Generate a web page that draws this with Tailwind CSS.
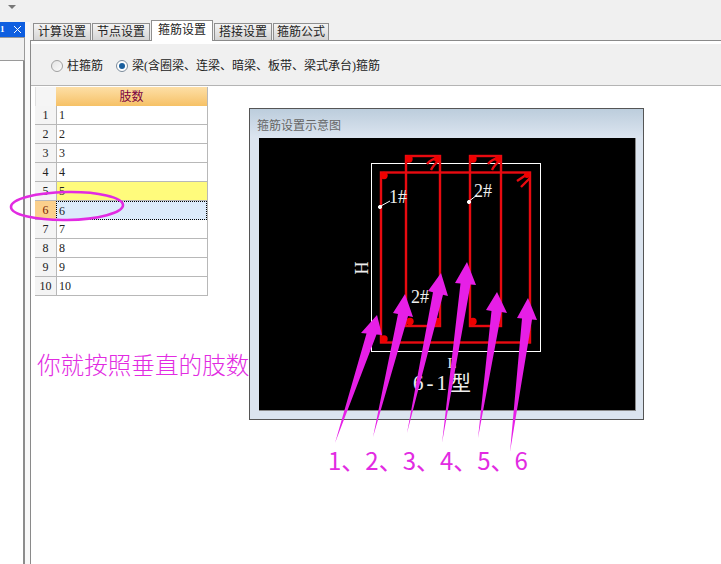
<!DOCTYPE html>
<html lang="zh">
<head>
<meta charset="utf-8">
<script src="https://cdn.jsdelivr.net/npm/@tailwindcss/browser@4"></script>
</head>
<body class="bg-white">
<div class="relative flex w-[721px] h-[564px] overflow-hidden bg-white text-[12px] leading-none text-[#222] font-['Liberation_Serif','Noto_Sans_CJK_SC',serif]">
  <!-- left dock -->
  <aside class="w-[30px] shrink-0 flex flex-col bg-[#f8f8f8]">
    <div class="h-[22px] bg-[#f0f0f0] flex justify-center pt-[5px] pr-[6px]">
      <span class="w-0 h-0 border-x-[4px] border-x-transparent border-t-[4px] border-t-[#777]"></span>
    </div>
    <div class="h-[15px] w-[25px] bg-[#0f5fe0] flex items-center justify-between pl-0 pr-[3px] text-white">
      <span class="text-[9px] font-bold">1</span>
      <svg width="9" height="9" viewBox="0 0 9 9"><path d="M1 1l7 7M8 1l-7 7" stroke="#fff" stroke-width="1"/></svg>
    </div>
    <div class="h-[24px] w-[25px] bg-[#f0f0f0] border-t border-b border-r border-[#9a9a9a]"></div>
    <div class="flex-1 w-[25px] bg-white border-r-2 border-[#8c8c8c]"></div>
  </aside>

  <main class="flex-1 flex flex-col border-l-0">
    <!-- tabs -->
    <div class="h-[41px] shrink-0 bg-[#f0f0f0] border-b border-[#8a8a8a] flex items-end pl-[3px] gap-px">
      <div class="w-[58px] h-[17px] bg-gradient-to-b from-[#f4f4f4] to-[#d4d4d4] border border-b-0 border-[#8f8f8f] flex items-center justify-center">计算设置</div>
      <div class="w-[58px] h-[17px] bg-gradient-to-b from-[#f4f4f4] to-[#d4d4d4] border border-b-0 border-[#8f8f8f] flex items-center justify-center">节点设置</div>
      <div class="w-[62px] h-[21px] -mb-px relative bg-white border border-b-0 border-[#8f8f8f] flex items-center justify-center pb-[2px]">箍筋设置</div>
      <div class="w-[58px] h-[17px] bg-gradient-to-b from-[#f4f4f4] to-[#d4d4d4] border border-b-0 border-[#8f8f8f] flex items-center justify-center">搭接设置</div>
      <div class="w-[56px] h-[17px] bg-gradient-to-b from-[#f4f4f4] to-[#d4d4d4] border border-b-0 border-[#8f8f8f] flex items-center justify-center">箍筋公式</div>
    </div>

    <!-- pane -->
    <div class="flex-1 border-l border-[#8a8a8a] flex flex-col">
      <div class="h-[3px] bg-white"></div>
      <div class="h-[42px] shrink-0 bg-[#f0f0f0] border-b border-[#b4b4b4] flex items-center pl-[20px] pt-[3px]">
        <span class="w-[12px] h-[12px] rounded-full border border-[#a0a0a0] bg-gradient-to-br from-[#e4e4e4] to-[#fafafa]"></span>
        <span class="ml-[4px]">柱箍筋</span>
        <span class="ml-[13px] w-[12px] h-[12px] rounded-full border border-[#7a8a9a] bg-white flex items-center justify-center"><span class="w-[6px] h-[6px] rounded-full bg-[#1a5f9e]"></span></span>
        <span class="ml-[4px]">梁(含圈梁、连梁、暗梁、板带、梁式承台)箍筋</span>
      </div>

      <div class="flex flex-1">
        <!-- table column -->
        <div class="w-[173px] ml-[4px] mt-px shrink-0 flex flex-col">
          <div class="grid grid-cols-[21px_151px] auto-rows-[19px] border-r border-[#b8b8b8] w-[173px]">
            <div class="bg-[#f5f5f5] border-l border-[#e0e0e0]"></div>
            <div class="bg-gradient-to-b from-[#fddfa6] to-[#f6c165] flex items-center justify-center text-[#7a0040]">肢数</div>

            <div class="bg-[#f4f4f4] border-b border-[#b8b8b8] flex items-center justify-center">1</div>
            <div class="bg-white border-b border-l border-[#b8b8b8] flex items-center pl-[2px]">1</div>
            <div class="bg-[#f4f4f4] border-b border-[#b8b8b8] flex items-center justify-center">2</div>
            <div class="bg-white border-b border-l border-[#b8b8b8] flex items-center pl-[2px]">2</div>
            <div class="bg-[#f4f4f4] border-b border-[#b8b8b8] flex items-center justify-center">3</div>
            <div class="bg-white border-b border-l border-[#b8b8b8] flex items-center pl-[2px]">3</div>
            <div class="bg-[#f4f4f4] border-b border-[#b8b8b8] flex items-center justify-center">4</div>
            <div class="bg-white border-b border-l border-[#b8b8b8] flex items-center pl-[2px]">4</div>
            <div class="bg-[#f4f4f4] border-b border-[#b8b8b8] flex items-center justify-center">5</div>
            <div class="bg-[#fffb7c] border-b border-l border-[#b8b8b8] flex items-center pl-[2px]">5</div>
            <div class="bg-[#fbd08c] border-b border-[#b8b8b8] flex items-center justify-center text-[#7a2000]">6</div>
            <div class="bg-[#dcebfb] border border-dotted border-black flex items-center pl-[2px]">6</div>
            <div class="bg-[#f4f4f4] border-b border-[#b8b8b8] flex items-center justify-center">7</div>
            <div class="bg-white border-b border-l border-[#b8b8b8] flex items-center pl-[2px]">7</div>
            <div class="bg-[#f4f4f4] border-b border-[#b8b8b8] flex items-center justify-center">8</div>
            <div class="bg-white border-b border-l border-[#b8b8b8] flex items-center pl-[2px]">8</div>
            <div class="bg-[#f4f4f4] border-b border-[#b8b8b8] flex items-center justify-center">9</div>
            <div class="bg-white border-b border-l border-[#b8b8b8] flex items-center pl-[2px]">9</div>
            <div class="bg-[#f4f4f4] border-b border-[#b8b8b8] flex items-center justify-center">10</div>
            <div class="bg-white border-b border-l border-[#b8b8b8] flex items-center pl-[2px]">10</div>
          </div>
          <p class="relative z-10 mt-[55px] ml-[2px] whitespace-nowrap text-[23.6px] leading-[27px] text-[#e22be2] font-['Noto_Sans_CJK_SC',sans-serif] font-light">你就按照垂直的肢数</p>
        </div>

        <!-- diagram column -->
        <div class="ml-[41px] mt-[22px] w-[395px] flex flex-col">
          <div class="w-[395px] h-[312px] border border-[#555] bg-[#dbe4ef] flex flex-col">
            <div class="h-[29px] shrink-0 pl-[7px] pt-[11px] text-[#666] bg-gradient-to-b from-[#bccddc] to-[#dce5f0]">箍筋设置示意图</div>
            <div class="ml-[9px] w-[377px] h-[273px] bg-black border-r border-b border-[#888]">
              <svg width="376" height="272" viewBox="259 138 376 272" class="block">
                <rect x="371.5" y="163.5" width="169" height="188" fill="none" stroke="#fff" stroke-width="1"/>
                <g fill="none" stroke="#e80a10" stroke-width="2.4">
                  <rect x="381" y="172.5" width="149" height="170"/>
                  <rect x="406" y="156" width="34" height="170"/>
                  <rect x="470" y="156" width="31" height="170"/>
                  <path d="M427 164q4-5 11-6M431 170q3-6 8-9"/>
                  <path d="M488 164q4-5 11-6M492 170q3-6 8-9"/>
                  <path d="M517 181l12-8M521 187l9-9"/>
                </g>
                <g fill="#f00000">
                  <circle cx="384" cy="175.5" r="3.7"/>
                  <circle cx="409" cy="159" r="3.7"/>
                  <circle cx="473" cy="159" r="3.7"/>
                  <circle cx="437" cy="159" r="3"/>
                  <circle cx="498" cy="159" r="3"/>
                  <circle cx="527" cy="175" r="3"/>
                  <circle cx="384" cy="339" r="3.7"/>
                  <circle cx="410" cy="321.5" r="3.7"/>
                  <circle cx="437" cy="321.5" r="3.7"/>
                  <circle cx="473" cy="321.5" r="3.7"/>
                  <circle cx="498" cy="322" r="3"/>
                  <circle cx="528" cy="340" r="2"/>
                </g>
                <g stroke="#fff" stroke-width="1" fill="#fff">
                  <path d="M379 207l11-6"/>
                  <path d="M468 202l9-7"/>
                  <circle cx="380" cy="207" r="1.6"/>
                  <circle cx="469" cy="202" r="1.6"/>
                </g>
                <g fill="#eee" class="font-['Liberation_Serif','Noto_Sans_CJK_SC',serif]">
                  <text x="389" y="203" font-size="18">1#</text>
                  <text x="474" y="197" font-size="18">2#</text>
                  <text x="411" y="303" font-size="18">2#</text>
                  <text x="362" y="274" font-size="18" text-anchor="middle" transform="rotate(-90 362 268)">H</text>
                  <text x="452" y="368" font-size="15" text-anchor="middle">L</text>
                  <text x="413" y="390" font-size="21" letter-spacing="3">6-1<tspan letter-spacing="0">型</tspan></text>
                </g>
              </svg>
            </div>
          </div>
          <p class="relative z-10 mt-[28px] ml-[79px] whitespace-nowrap text-[24px] leading-[24px] text-[#e22be2] font-['Noto_Sans_CJK_SC',sans-serif]">1、2、3、4、5、6</p>
        </div>
      </div>
    </div>
  </main>

  <!-- hand-drawn annotations lying over the screenshot -->
  <svg class="absolute inset-0 z-20 pointer-events-none" width="721" height="564" viewBox="0 0 721 564">
    <ellipse cx="67" cy="206" rx="56" ry="14" fill="none" stroke="#e22be2" stroke-width="2.6" transform="rotate(-1 67 206)"/>
    <g fill="#e61fe6">
      <polygon points="335,443 366.5,333.5 361,333 377,315 382,335 376.5,334.5"/>
      <polygon points="373,437 398,314 393,313 405,294 413,317 408,316"/>
      <polygon points="407,433 433,292.3 428,291 441,273 448,296 443,294.7"/>
      <polygon points="442,443 460.5,283.5 455,283 467,262 476,285 470.5,284.5"/>
      <polygon points="478,438 491.5,311 486,310 497,292 507,313 501.5,312"/>
      <polygon points="510,452 522,318.5 517,318 528,298 537,320 532,319.5"/>
    </g>
  </svg>
</div>
</body>
</html>
